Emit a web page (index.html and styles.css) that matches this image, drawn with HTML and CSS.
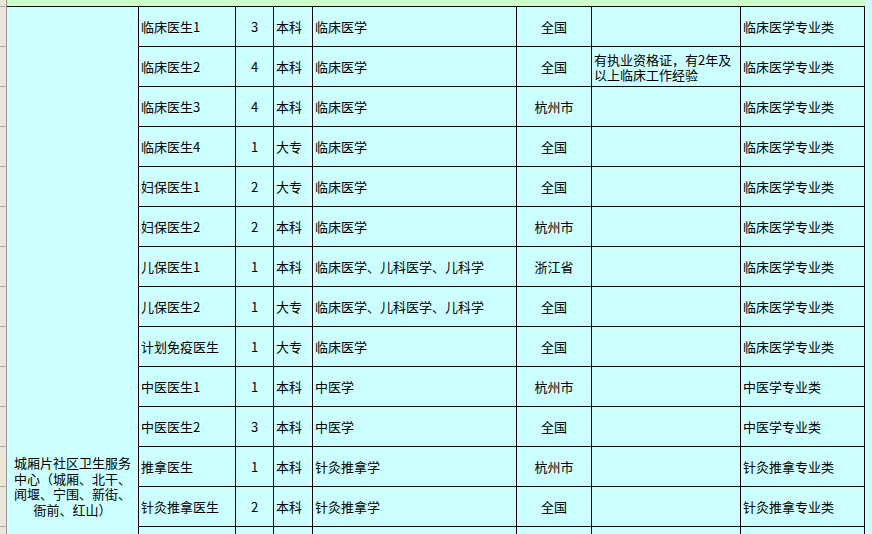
FILE: index.html
```html
<!DOCTYPE html>
<html lang="zh">
<head>
<meta charset="utf-8">
<title>招聘计划表</title>
<link rel="stylesheet" href="styles.css">
</head>
<body>
<div class="sheet">
  <div class="rowhdr">
    <div class="corner"></div>
    <div class="rh"></div><div class="rh"></div><div class="rh"></div><div class="rh"></div>
    <div class="rh"></div><div class="rh"></div><div class="rh"></div><div class="rh"></div>
    <div class="rh"></div><div class="rh"></div><div class="rh"></div><div class="rh"></div>
    <div class="rh"></div><div class="rh"></div>
  </div>
  <div class="main">
    <div class="topbar"></div>
    <div class="grid">
      <div class="unit">城厢片社区卫生服务中心（城厢、北干、闻堰、宁围、新街、衙前、红山）</div>

      <div class="c">临床医生1</div><div class="c num">3</div><div class="c">本科</div><div class="c">临床医学</div><div class="c ctr">全国</div><div class="c"></div><div class="c">临床医学专业类</div>
      <div class="c">临床医生2</div><div class="c num">4</div><div class="c">本科</div><div class="c">临床医学</div><div class="c ctr">全国</div><div class="c req">有执业资格证，有2年及以上临床工作经验</div><div class="c">临床医学专业类</div>
      <div class="c">临床医生3</div><div class="c num">4</div><div class="c">本科</div><div class="c">临床医学</div><div class="c ctr">杭州市</div><div class="c"></div><div class="c">临床医学专业类</div>
      <div class="c">临床医生4</div><div class="c num">1</div><div class="c">大专</div><div class="c">临床医学</div><div class="c ctr">全国</div><div class="c"></div><div class="c">临床医学专业类</div>
      <div class="c">妇保医生1</div><div class="c num">2</div><div class="c">大专</div><div class="c">临床医学</div><div class="c ctr">全国</div><div class="c"></div><div class="c">临床医学专业类</div>
      <div class="c">妇保医生2</div><div class="c num">2</div><div class="c">本科</div><div class="c">临床医学</div><div class="c ctr">杭州市</div><div class="c"></div><div class="c">临床医学专业类</div>
      <div class="c">儿保医生1</div><div class="c num">1</div><div class="c">本科</div><div class="c">临床医学、儿科医学、儿科学</div><div class="c ctr">浙江省</div><div class="c"></div><div class="c">临床医学专业类</div>
      <div class="c">儿保医生2</div><div class="c num">1</div><div class="c">大专</div><div class="c">临床医学、儿科医学、儿科学</div><div class="c ctr">全国</div><div class="c"></div><div class="c">临床医学专业类</div>
      <div class="c">计划免疫医生</div><div class="c num">1</div><div class="c">大专</div><div class="c">临床医学</div><div class="c ctr">全国</div><div class="c"></div><div class="c">临床医学专业类</div>
      <div class="c">中医医生1</div><div class="c num">1</div><div class="c">本科</div><div class="c">中医学</div><div class="c ctr">杭州市</div><div class="c"></div><div class="c">中医学专业类</div>
      <div class="c">中医医生2</div><div class="c num">3</div><div class="c">本科</div><div class="c">中医学</div><div class="c ctr">全国</div><div class="c"></div><div class="c">中医学专业类</div>
      <div class="c">推拿医生</div><div class="c num">1</div><div class="c">本科</div><div class="c">针灸推拿学</div><div class="c ctr">杭州市</div><div class="c"></div><div class="c">针灸推拿专业类</div>
      <div class="c">针灸推拿医生</div><div class="c num">2</div><div class="c">本科</div><div class="c">针灸推拿学</div><div class="c ctr">全国</div><div class="c"></div><div class="c">针灸推拿专业类</div>
      <div class="c"></div><div class="c"></div><div class="c"></div><div class="c"></div><div class="c"></div><div class="c"></div><div class="c"></div>
    </div>
  </div>
</div>
</body>
</html>
```

FILE: styles.css
```css
html, body {
  margin: 0;
  padding: 0;
}
body {
  width: 872px;
  height: 534px;
  overflow: hidden;
  background: #ccffff;
  font-family: "Noto Sans CJK SC", "Noto Sans", sans-serif;
  font-size: 13px;
  color: #000;
}
.sheet {
  display: flex;
  align-items: flex-start;
}
.rowhdr {
  width: 6px;
  flex: none;
  background: #ece6d8;
  border-right: 1px solid #9c9c9c;
}
.corner {
  height: 6px;
  border-bottom: 1px solid #b0aca0;
}
.rh {
  height: 39px;
  border-bottom: 1px solid #b0aca0;
}
.main {
  flex: 1;
}
.topbar {
  height: 6px;
  background: #ccffcc;
  border-bottom: 1px solid #000;
  width: 858px;
}
.grid {
  display: grid;
  grid-template-columns: 131px 96px 37px 38px 203px 74px 148px 123px;
  grid-auto-rows: 39px;
  gap: 1px;
  padding-right: 1px;
  background: #000;
  width: max-content;
}
.unit {
  grid-row: 1 / span 14;
  grid-column: 1;
  background: #ccffff;
  padding: 448px 6px 0;
  text-align: center;
  line-height: 15.5px;
}
.c {
  background: #ccffff;
  display: flex;
  align-items: center;
  padding: 0 2px;
  line-height: 15px;
  white-space: nowrap;
}
.num, .ctr {
  justify-content: center;
}
.req {
  white-space: normal;
  padding-right: 8px;
}
```
